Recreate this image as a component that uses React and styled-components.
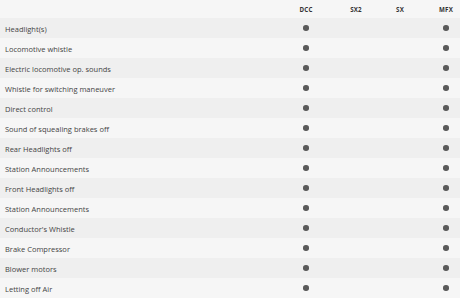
import styled, { createGlobalStyle } from "styled-components";

const GlobalStyle = createGlobalStyle`
  body {
    margin: 0;
    background: #ffffff;
    font-family: "Open Sans", "Liberation Sans", sans-serif;
  }
`;

const COLUMNS = "1fr 76px 24px 64px 28px";

const Table = styled.div`
  width: 460px;
  display: flex;
  flex-direction: column;
`;

const HeadRow = styled.div`
  display: grid;
  grid-template-columns: ${COLUMNS};
  height: 18px;
  align-items: center;
  background: #f6f6f6;
`;

const HeadCell = styled.div`
  text-align: center;
  font-size: 6.2px;
  font-weight: 700;
  color: #333333;
  letter-spacing: 0.2px;
`;

const Row = styled.div`
  display: grid;
  grid-template-columns: ${COLUMNS};
  height: 20px;
  align-items: center;
  background: ${(p) => (p.$odd ? "#efefef" : "#f6f6f6")};
`;

const Label = styled.div`
  padding-left: 5px;
  padding-top: 1px;
  font-size: 7.5px;
  color: #444444;
  white-space: nowrap;
`;

const Cell = styled.div`
  display: flex;
  justify-content: center;
`;

const Dot = styled.span`
  width: 5.5px;
  height: 5.5px;
  border-radius: 50%;
  background: #5a5a5a;
`;

const protocols = ["DCC", "SX2", "SX", "MFX"];

const functions = [
  "Headlight(s)",
  "Locomotive whistle",
  "Electric locomotive op. sounds",
  "Whistle for switching maneuver",
  "Direct control",
  "Sound of squealing brakes off",
  "Rear Headlights off",
  "Station Announcements",
  "Front Headlights off",
  "Station Announcements",
  "Conductor's Whistle",
  "Brake Compressor",
  "Blower motors",
  "Letting off Air",
];

const supported = { DCC: true, SX2: false, SX: false, MFX: true };

export default function App() {
  return (
    <>
      <GlobalStyle />
      <Table>
        <HeadRow>
          <div />
          {protocols.map((p) => (
            <HeadCell key={p}>{p}</HeadCell>
          ))}
        </HeadRow>
        {functions.map((name, i) => (
          <Row key={i} $odd={i % 2 === 0}>
            <Label>{name}</Label>
            {protocols.map((p) => (
              <Cell key={p}>{supported[p] && <Dot />}</Cell>
            ))}
          </Row>
        ))}
      </Table>
    </>
  );
}
